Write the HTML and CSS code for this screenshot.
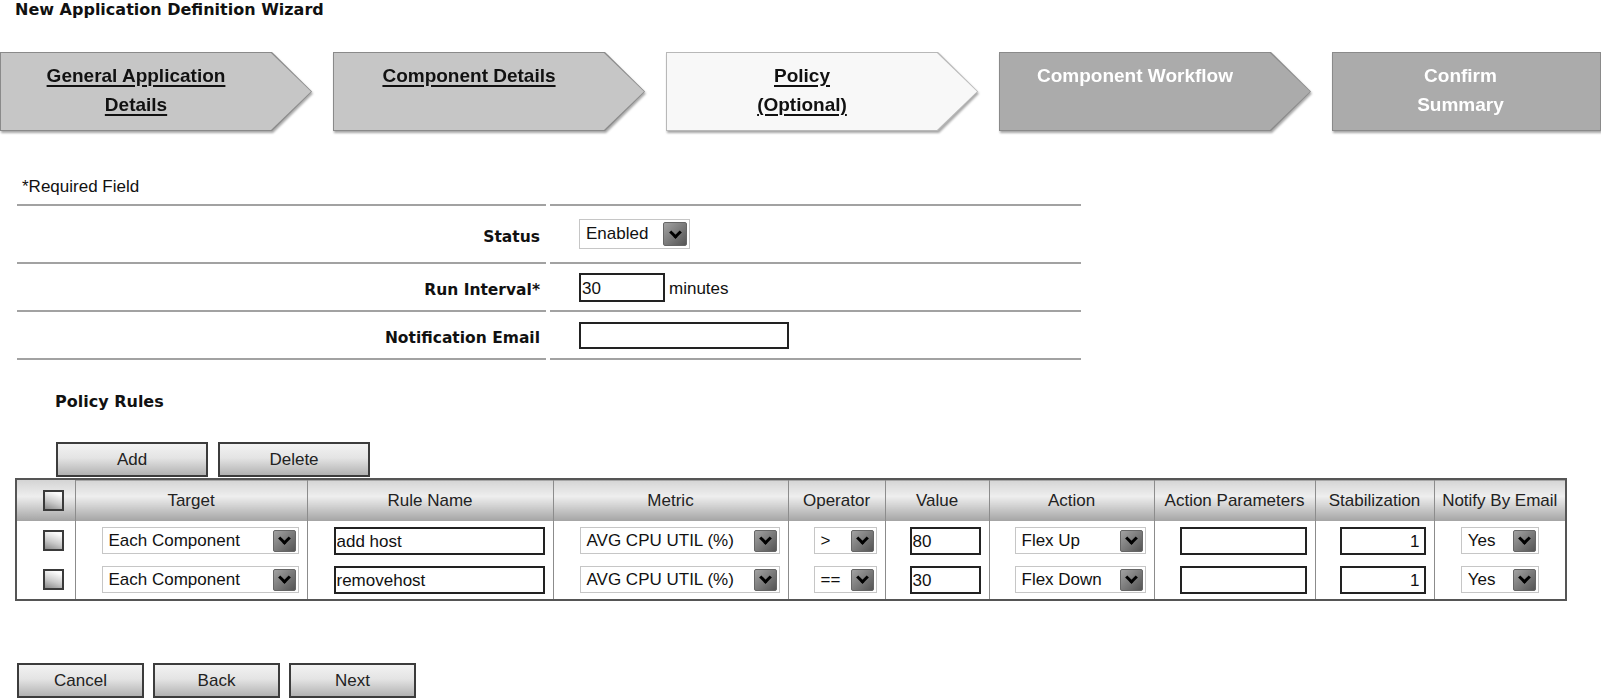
FILE: index.html
```html
<!DOCTYPE html>
<html lang="en">
<head>
    <meta charset="UTF-8">
    <meta name="viewport" content="width=device-width, initial-scale=1.0">
    <title>New Application Definition Wizard</title>
    <link rel="stylesheet" href="styles.css">
</head>
<body>
    <h1 class="title">New Application Definition Wizard</h1>

    <div class="steps">
        <div class="step done">
            <div class="step-inner"><a href="#">General Application<br>Details</a></div>
        </div>
        <div class="step done">
            <div class="step-inner"><a href="#">Component Details</a></div>
        </div>
        <div class="step active">
            <div class="step-inner"><a href="#">Policy<br>(Optional)</a></div>
        </div>
        <div class="step todo">
            <div class="step-inner"><span>Component Workflow</span></div>
        </div>
        <div class="step todo last">
            <div class="step-inner"><span>Confirm<br>Summary</span></div>
        </div>
    </div>

    <div class="fields">
        <div class="field-row required-row">
            <div class="field-label required">*Required Field</div>
            <div class="field-value"></div>
        </div>
        <div class="field-row status-row">
            <div class="field-label">Status</div>
            <div class="field-value">
                <div class="select w-status"><span>Enabled</span><span class="arrow"></span></div>
            </div>
        </div>
        <div class="field-row">
            <div class="field-label">Run Interval*</div>
            <div class="field-value">
                <input type="text" class="text-input w-interval" value="30">
                <span class="unit">minutes</span>
            </div>
        </div>
        <div class="field-row">
            <div class="field-label">Notification Email</div>
            <div class="field-value">
                <input type="text" class="text-input w-email" value="">
            </div>
        </div>
    </div>

    <h2 class="section-title">Policy Rules</h2>

    <div class="rule-buttons">
        <button class="btn">Add</button>
        <button class="btn">Delete</button>
    </div>

    <table class="rules">
        <colgroup>
            <col class="col-check">
            <col class="col-target">
            <col class="col-name">
            <col class="col-metric">
            <col class="col-operator">
            <col class="col-value">
            <col class="col-action">
            <col class="col-params">
            <col class="col-stab">
            <col class="col-notify">
        </colgroup>
        <thead>
            <tr>
                <th class="check"><input type="checkbox" class="box"></th>
                <th>Target</th>
                <th>Rule Name</th>
                <th>Metric</th>
                <th>Operator</th>
                <th>Value</th>
                <th>Action</th>
                <th>Action Parameters</th>
                <th>Stabilization</th>
                <th>Notify By Email</th>
            </tr>
        </thead>
        <tbody>
            <tr>
                <td class="check"><input type="checkbox" class="box"></td>
                <td><div class="select w-target"><span>Each Component</span><span class="arrow"></span></div></td>
                <td><input type="text" class="text-input w-name" value="add host"></td>
                <td><div class="select w-metric"><span>AVG CPU UTIL (%)</span><span class="arrow"></span></div></td>
                <td><div class="select w-operator"><span>&gt;</span><span class="arrow"></span></div></td>
                <td><input type="text" class="text-input w-value" value="80"></td>
                <td><div class="select w-action"><span>Flex Up</span><span class="arrow"></span></div></td>
                <td><input type="text" class="text-input w-params" value=""></td>
                <td><input type="text" class="text-input w-stab" value="1"></td>
                <td class="notify"><div class="select w-notify"><span>Yes</span><span class="arrow"></span></div></td>
            </tr>
            <tr>
                <td class="check"><input type="checkbox" class="box"></td>
                <td><div class="select w-target"><span>Each Component</span><span class="arrow"></span></div></td>
                <td><input type="text" class="text-input w-name" value="removehost"></td>
                <td><div class="select w-metric"><span>AVG CPU UTIL (%)</span><span class="arrow"></span></div></td>
                <td><div class="select w-operator"><span>==</span><span class="arrow"></span></div></td>
                <td><input type="text" class="text-input w-value" value="30"></td>
                <td><div class="select w-action"><span>Flex Down</span><span class="arrow"></span></div></td>
                <td><input type="text" class="text-input w-params" value=""></td>
                <td><input type="text" class="text-input w-stab" value="1"></td>
                <td class="notify"><div class="select w-notify"><span>Yes</span><span class="arrow"></span></div></td>
            </tr>
        </tbody>
    </table>

    <div class="nav-buttons">
        <button class="btn nav">Cancel</button>
        <button class="btn nav">Back</button>
        <button class="btn nav">Next</button>
    </div>
</body>
</html>
```

FILE: styles.css
```css
body {
    margin: 0;
    font-family: "Liberation Sans", Arial, sans-serif;
    font-size: 17px;
    color: #111;
    background-color: #fff;
}

.title {
    margin: 0;
    padding: 1px 0 0 15px;
    font: bold 16px/17px "DejaVu Sans", sans-serif;
    color: #111;
}

/* wizard steps */

.steps {
    display: flex;
    gap: 21px;
    margin-top: 34px;
    filter: drop-shadow(1px 2px 1px rgba(0, 0, 0, 0.35));
}

.step {
    width: 312px;
    height: 79px;
    padding: 1px;
    box-sizing: border-box;
    flex: none;
    background-color: #8a8a8a;
    clip-path: polygon(0 0, calc(100% - 40px) 0, 100% 50%, calc(100% - 40px) 100%, 0 100%);
}

.step-inner {
    height: 100%;
    box-sizing: border-box;
    padding: 8px 40px 0 0;
    text-align: center;
    font: bold 19px/29px "Liberation Sans", Arial, sans-serif;
    background-color: #c6c6c6;
    clip-path: polygon(0 0, calc(100% - 40px) 0, 100% 50%, calc(100% - 40px) 100%, 0 100%);
}

.step-inner a {
    color: #111;
    text-decoration: underline;
    text-decoration-thickness: 2px;
    text-underline-offset: 3px;
}

.step.active {
    background-color: #b8b8b8;
}

.step.active .step-inner {
    background-color: #f8f8f8;
}

.step.todo .step-inner {
    background-color: #ababab;
    color: #fff;
}

.step.last {
    width: 269px;
    clip-path: none;
}

.step.last .step-inner {
    clip-path: none;
    padding-right: 12px;
}

/* general fields */

.fields {
    margin: 46px 0 0 17px;
    width: 1064px;
}

.field-row {
    display: grid;
    grid-template-columns: 529px 531px;
    column-gap: 4px;
    height: 48px;
}

.field-row > div {
    border-bottom: 2px solid #a2a2a2;
    display: flex;
    align-items: center;
}

.required-row {
    height: 29px;
}

.required-row > div {
    align-items: flex-start;
}

.status-row {
    height: 58px;
}

.field-label {
    justify-content: flex-end;
    padding: 5px 6px 0 0;
    font: bold 15.5px "DejaVu Sans", sans-serif;
}

.field-label.required {
    justify-content: flex-start;
    padding: 0 0 0 5px;
    font: 17px/20px "Liberation Sans", Arial, sans-serif;
}

.field-value {
    padding-left: 29px;
}

.unit {
    margin-left: 4px;
    padding-top: 3px;
}

/* form controls */

.text-input {
    height: 28px;
    box-sizing: border-box;
    border: 2px solid #222;
    padding: 3px 1px 0;
    margin: 0;
    font: 17px "Liberation Sans", Arial, sans-serif;
    color: #111;
    background-color: #fff;
    vertical-align: middle;
}

.select {
    display: inline-flex;
    align-items: center;
    justify-content: space-between;
    height: 27px;
    box-sizing: border-box;
    border: 1px solid #c6c6c6;
    padding: 0 2px 0 6px;
    background-color: #fff;
    vertical-align: middle;
    text-align: left;
}

.arrow {
    width: 23px;
    height: 22px;
    box-sizing: border-box;
    border: 1px solid #666;
    border-radius: 2px;
    background: linear-gradient(135deg, #a2a2a2, #555);
    display: flex;
    align-items: center;
    justify-content: center;
}

.arrow::after {
    content: "";
    width: 6px;
    height: 6px;
    border-right: 3px solid #000;
    border-bottom: 3px solid #000;
    transform: translateY(-2px) rotate(45deg);
}

.w-status { width: 111px; height: 30px; }
.w-status .arrow { width: 24px; height: 24px; }
.w-interval { width: 86px; height: 29px; }
.w-email { width: 210px; height: 27px; }

.w-target { width: 197px; }
.w-name { width: 211px; }
.w-metric { width: 200px; }
.w-operator { width: 63px; }
.w-value { width: 71px; }
.w-action { width: 131px; }
.w-params { width: 127px; }
.w-stab { width: 86px; text-align: right; padding-right: 4px; }
.w-notify { width: 78px; }

/* policy rules */

.section-title {
    margin: 32px 0 0 55px;
    font: bold 16px/20px "DejaVu Sans", sans-serif;
}

.rule-buttons {
    display: flex;
    gap: 10px;
    margin: 30px 0 0 56px;
}

.btn {
    width: 152px;
    height: 35px;
    border: 2px solid #3c3c3c;
    background: linear-gradient(#f2f2f2, #e4e4e4 45%, #b2b2b2);
    font: 17px "Liberation Sans", Arial, sans-serif;
    color: #222;
    padding: 0;
    cursor: pointer;
}

.rules {
    margin: 1px 0 0 15px;
    width: 1550px;
    table-layout: fixed;
    border-collapse: collapse;
    border: 2px solid #555;
}

.col-check { width: 59px; }
.col-target { width: 232px; }
.col-name { width: 246px; }
.col-metric { width: 235px; }
.col-operator { width: 97px; }
.col-value { width: 104px; }
.col-action { width: 165px; }
.col-params { width: 161px; }
.col-stab { width: 119px; }
.col-notify { width: 132px; }

.rules th {
    height: 41px;
    padding: 0;
    font-weight: normal;
    color: #222;
    text-align: center;
    border-left: 1px solid #8c8c8c;
    background: linear-gradient(#d4d4d4, #eeeeee 40%, #d6d6d6 60%, #a4a4a4);
}

.rules td {
    height: 39px;
    padding: 0 8px 0 0;
    text-align: right;
    vertical-align: middle;
    border-left: 1px solid #8c8c8c;
}

.rules .check {
    text-align: right;
    padding-right: 11px;
}

.rules td.notify {
    text-align: center;
    padding: 0;
}

.box {
    appearance: none;
    width: 21px;
    height: 21px;
    margin: 0;
    border: 2px solid #3a3a3a;
    background: linear-gradient(200deg, #fafafa 15%, #c8c8c8 60%, #8a8a8a);
    vertical-align: middle;
}

.nav-buttons {
    display: flex;
    gap: 9px;
    margin: 62px 0 0 17px;
}

.btn.nav {
    width: 127px;
}
```
